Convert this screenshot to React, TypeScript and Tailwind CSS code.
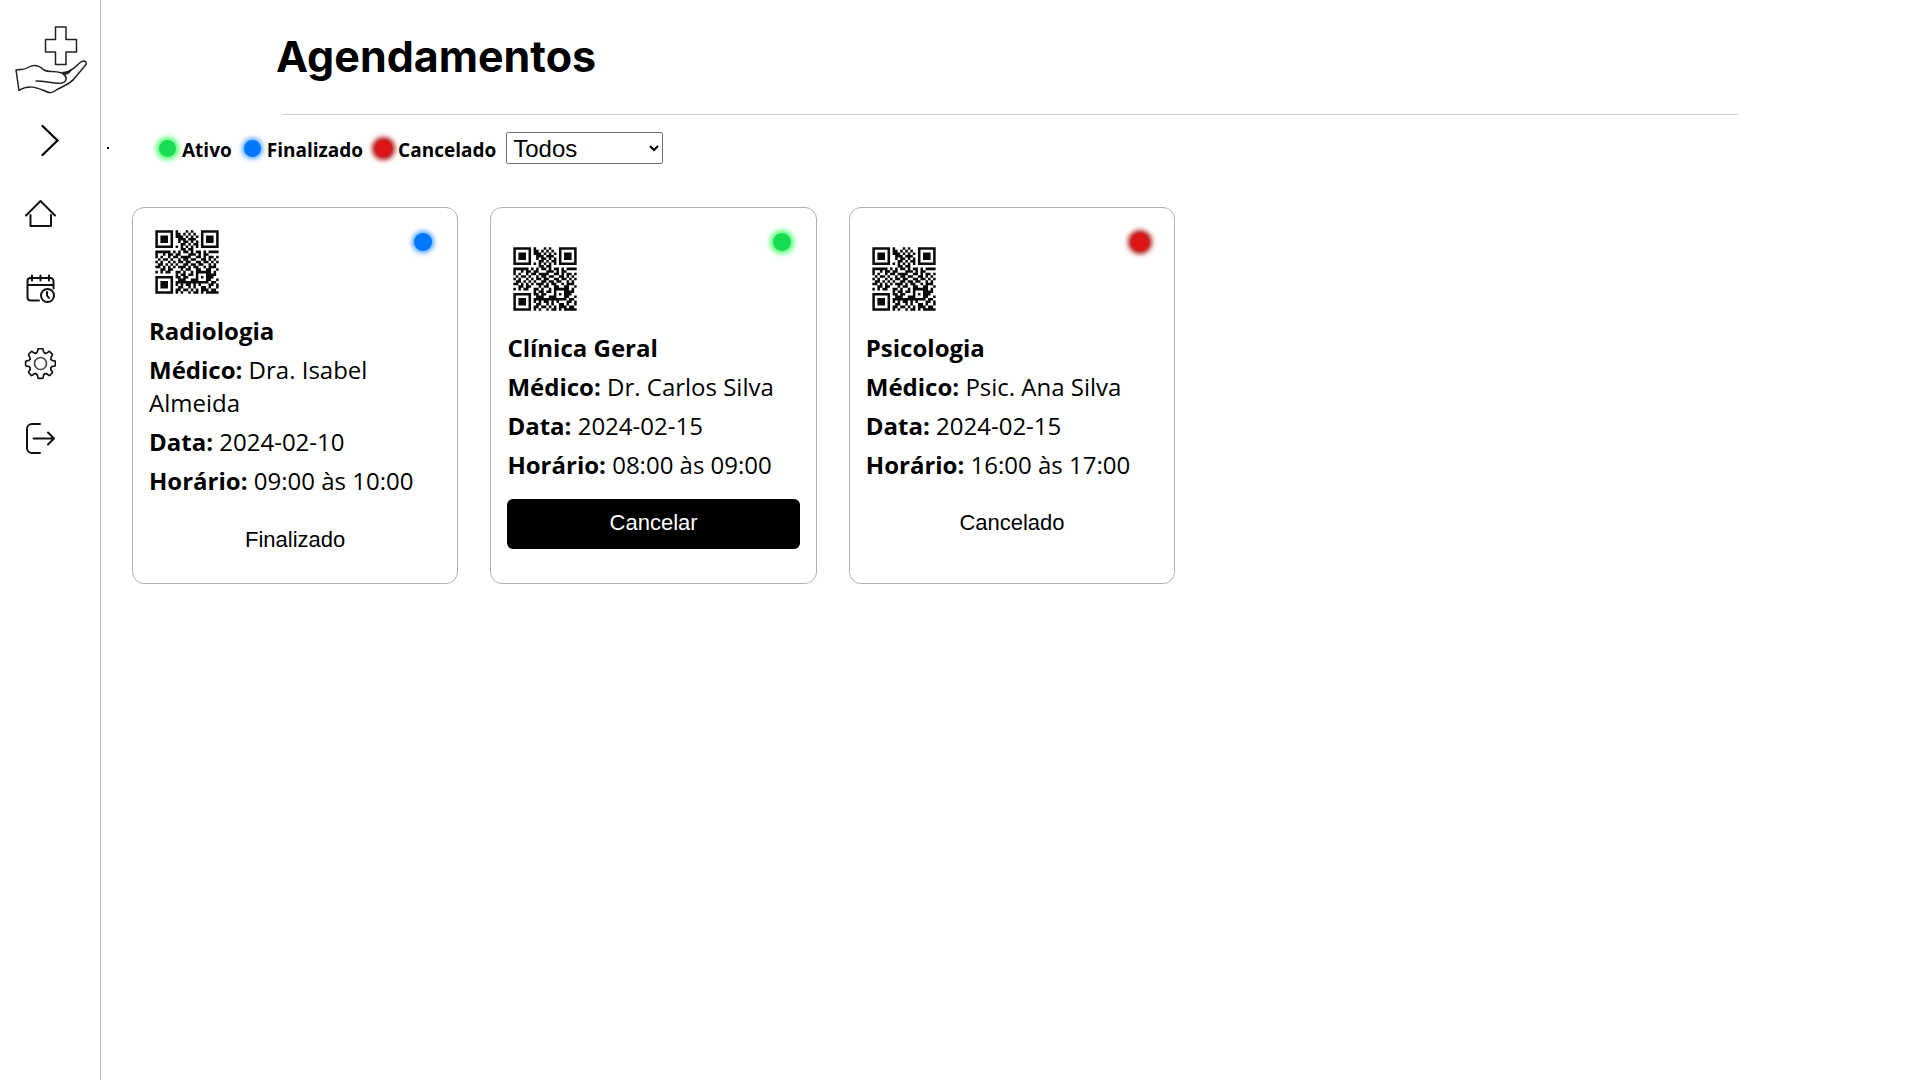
import React from "react";

type Status = "ativo" | "finalizado" | "cancelado";

const dotStyles: Record<Status, string> = {
  ativo: "bg-[#18dd54] shadow-[0_0_5px_3px_#5cff7a]",
  finalizado: "bg-[#0077ff] shadow-[0_0_5px_2px_#4ba3ff]",
  cancelado: "bg-[#dc1616] shadow-[0_0_5px_3px_#b01818]",
};

const QR_ROWS = [
  "1111111010001010001111111",
  "1000001011010101001000001",
  "1011101011101010101011101",
  "1011101001110111001011101",
  "1011101001011010101011101",
  "1000001000110101101000001",
  "1111111010101010101111111",
  "0000000000110110000000000",
  "1111110101011010110101111",
  "1001011011000111010110000",
  "1010010110111100110101101",
  "0101101001011011001101010",
  "1010010101101100110110101",
  "0110101010011011011001010",
  "1101010101110101100101110",
  "0011011000101100110011001",
  "1010110011010010111111010",
  "0000000010110110100011110",
  "1111111011011000101011100",
  "1000001001110011100011001",
  "1011101011111111111110110",
  "1011101010101101010001101",
  "1011101001100101001101001",
  "1000001011011010101110110",
  "1111111010100101101011111",
];

function QrCode() {
  return (
    <svg viewBox="-2.5 -2.5 30 30" className="size-[76px]" role="img" aria-label="QR Code">
      <path
        fill="#0a0a0a"
        d={QR_ROWS.map((row, y) =>
          [...row].map((c, x) => (c === "1" ? `M${x} ${y}h1v1h-1z` : "")).join("")
        ).join("")}
      />
    </svg>
  );
}

function Logo() {
  return (
    <svg viewBox="0 0 100 100" className="size-[100px]" fill="none" stroke="#222" strokeWidth="1.5" strokeLinejoin="round" strokeLinecap="round" role="img" aria-label="Logo">
      <path d="M55.500 27h10.500v12.500h10.500v12.500h-10.500v12.500h-10.500v-12.500h-10v-12.500h10z" />
      <path d="M16 70c4-1 8 0 11-2 6-4 12-3 17 2 5 3 9 0 18 3 5 3 6 8 0 10-8 1-15-2-26-2M19 90.500c9-6 17-3 25 0 6 3 8 3 13-1 8-4 14-6 19-13l10-12c1-5-4-4-7-1-4 4-9 9-16 9M16 70l3 20.500" />
      <path fill="#222" d="M63 73c3 0 6-1 8-3-2 3-4 4-6 4z" />
    </svg>
  );
}

const stroke = { fill: "none", stroke: "#111", strokeLinecap: "round", strokeLinejoin: "round" } as const;

function HomeIcon() {
  return (
    <svg viewBox="0 0 32 32" className="size-8" {...stroke} strokeWidth="2" aria-hidden="true">
      <path d="M2 17.500 16.500 3 31 17.500M6.500 17v11H27V17" />
    </svg>
  );
}

function CalendarIcon() {
  return (
    <svg viewBox="0 0 32 32" className="size-8" {...stroke} strokeWidth="2" aria-hidden="true">
      <path d="M15 27.500H6.500a3 3 0 0 1-3-3V8a3 3 0 0 1 3-3h20a3 3 0 0 1 3 3v7.500M3.500 12h26M8 2.500v5M16.500 2.500v5M25 2.500v5" />
      <circle cx="23.500" cy="22.500" r="6.500" />
      <path d="M23 19v3.500l2 2.500" />
    </svg>
  );
}

function GearIcon() {
  const points = Array.from({ length: 8 }, (_, i) => i * 45);
  return (
    <svg viewBox="-16.5 -15.5 32 32" className="size-8" {...stroke} strokeWidth="1.700" aria-hidden="true">
      <circle r="6" stroke="#444" />
      {points.map((a) => (
        <path
          key={a}
          transform={`rotate(${a})`}
          d="M-4.300-10.400Q-2.800-11-2.700-13.500Q-2.600-14.900-1.800-14.900H1.800Q2.600-14.900 2.700-13.500Q2.800-11 4.300-10.400"
        />
      ))}
    </svg>
  );
}

function LogoutIcon() {
  return (
    <svg viewBox="0 0 32 32" className="size-8" {...stroke} strokeWidth="2" aria-hidden="true">
      <path d="M16 1H8a5 5 0 0 0-5 5v19a5 5 0 0 0 5 5h8M9.500 15.500h20M24 9.500l6 6-6 6" />
    </svg>
  );
}

const navItems = [
  { label: "Início", icon: <HomeIcon /> },
  { label: "Agendamentos", icon: <CalendarIcon /> },
  { label: "Configurações", icon: <GearIcon /> },
  { label: "Sair", icon: <LogoutIcon /> },
];

function Sidebar() {
  return (
    <aside className="flex w-[101px] shrink-0 flex-col border-r border-[#b8b8b8]">
      <Logo />
      <button type="button" aria-label="Expandir menu" className="ml-8 mt-6 flex size-8 justify-center">
        <svg viewBox="0 0 32 32" className="size-8" fill="none" stroke="#000" strokeWidth="2.200" strokeLinecap="round" aria-hidden="true">
          <path d="M10.500 2l15 14.500L10.500 31" />
        </svg>
      </button>
      <nav className="ml-6 mt-[42px] flex flex-col items-start gap-[43px]">
        {navItems.map((item) => (
          <a key={item.label} href="#" aria-label={item.label} className="block">
            {item.icon}
          </a>
        ))}
      </nav>
    </aside>
  );
}

function LegendItem({ status, label }: { status: Status; label: string }) {
  return (
    <span className="flex items-center gap-1.5">
      <span className={`size-[17px] rounded-full ${dotStyles[status]}`} />
      <span className="pt-1 text-[19px] leading-6 font-bold">{label}</span>
    </span>
  );
}

interface Appointment {
  specialty: string;
  doctor: string;
  date: string;
  time: string;
  status: Status;
  action: string;
}

const appointments: Appointment[] = [
  { specialty: "Radiologia", doctor: "Dra. Isabel Almeida", date: "2024-02-10", time: "09:00 às 10:00", status: "finalizado", action: "Finalizado" },
  { specialty: "Clínica Geral", doctor: "Dr. Carlos Silva", date: "2024-02-15", time: "08:00 às 09:00", status: "ativo", action: "Cancelar" },
  { specialty: "Psicologia", doctor: "Psic. Ana Silva", date: "2024-02-15", time: "16:00 às 17:00", status: "cancelado", action: "Cancelado" },
];

function AppointmentCard({ item }: { item: Appointment }) {
  return (
    <article className="relative flex w-[17vw] flex-col justify-center rounded-xl border border-[#b0b0b0] px-4 pt-4 pb-[18px]">
      <span className={`absolute right-[25px] top-[25px] size-[18px] rounded-full ${dotStyles[item.status]}`} />
      <QrCode />
      <div className="mt-3.5 flex flex-col gap-1.5 text-2xl leading-[33px] font-normal">
        <h2 className="font-bold">{item.specialty}</h2>
        <p><strong className="font-bold">Médico:</strong> {item.doctor}</p>
        <p><strong className="font-bold">Data:</strong> {item.date}</p>
        <p><strong className="font-bold">Horário:</strong> {item.time}</p>
      </div>
      <button
        type="button"
        disabled={item.status !== "ativo"}
        className={`mt-[18px] h-[50px] w-full rounded-md pb-0.5 font-['Liberation_Sans',Arial,sans-serif] text-[22px] ${item.status === "ativo" ? "bg-black text-white" : "text-black"}`}
      >
        {item.action}
      </button>
    </article>
  );
}

export default function App() {
  return (
    <div className="flex min-h-screen bg-white font-['Open_Sans','Noto_Sans',sans-serif] text-black">
      <Sidebar />
      <main className="flex-1">
        <h1 className="ml-[175px] pt-[26px] font-['Inter',sans-serif] text-[43px] leading-[60px] font-bold">Agendamentos</h1>
        <hr className="mx-auto mt-7 w-4/5 border-[#ccc]" />
        <div className="mt-[17px] flex h-8 items-center">
          <span className="ml-1.5 size-[2px] bg-black" />
          <div className="ml-[50px] flex items-center gap-3">
            <LegendItem status="ativo" label="Ativo" />
            <LegendItem status="finalizado" label="Finalizado" />
            <LegendItem status="cancelado" label="Cancelado" />
          </div>
          <select
            aria-label="Filtrar por status"
            defaultValue="Todos"
            className="ml-2.5 h-8 w-[157px] rounded-xs border border-[#767676] bg-white px-0.5 font-['Liberation_Sans',Arial,sans-serif] text-2xl leading-7"
          >
            <option>Todos</option>
            <option>Ativo</option>
            <option>Finalizado</option>
            <option>Cancelado</option>
          </select>
        </div>
        <section className="mt-[43px] ml-[31px] flex flex-wrap gap-8">
          {appointments.map((item) => (
            <AppointmentCard key={item.specialty} item={item} />
          ))}
        </section>
      </main>
    </div>
  );
}
